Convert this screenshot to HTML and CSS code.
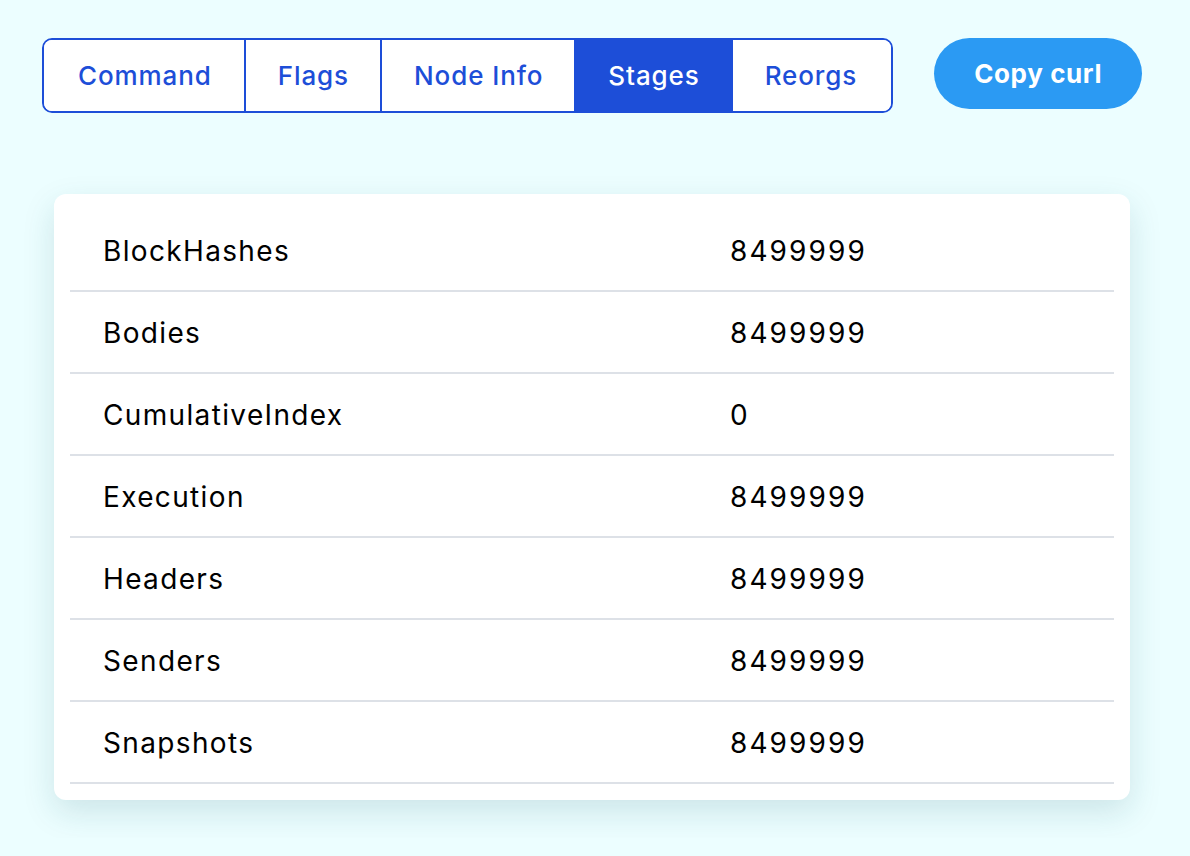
FILE: index.html
```html
<!DOCTYPE html>
<html>
<head>
<meta charset="utf-8">
<link rel="stylesheet" href="styles.css">
</head>
<body>
<div class="page">
  <div class="toolbar">
    <div class="tabs">
      <button class="tab">Command</button>
      <button class="tab">Flags</button>
      <button class="tab">Node Info</button>
      <button class="tab active">Stages</button>
      <button class="tab">Reorgs</button>
    </div>
    <button class="copy">Copy curl</button>
  </div>
  <div class="card">
    <table class="stages">
      <tr><td class="name">BlockHashes</td><td class="val">8499999</td></tr>
      <tr><td class="name">Bodies</td><td class="val">8499999</td></tr>
      <tr><td class="name">CumulativeIndex</td><td class="val">0</td></tr>
      <tr><td class="name">Execution</td><td class="val">8499999</td></tr>
      <tr><td class="name">Headers</td><td class="val">8499999</td></tr>
      <tr><td class="name">Senders</td><td class="val">8499999</td></tr>
      <tr><td class="name">Snapshots</td><td class="val">8499999</td></tr>
    </table>
  </div>
</div>
</body>
</html>
```
FILE: styles.css
```css
html, body {
  margin: 0;
  padding: 0;
  background: #ecfeff;
  font-family: Inter, "Noto Sans", sans-serif;
}
.page {
  padding: 38px 42px;
}
.toolbar {
  display: flex;
  align-items: flex-start;
  gap: 41px;
}
.tabs {
  display: flex;
  flex-shrink: 0;
  border: 2px solid #1d4ed8;
  border-radius: 10px;
  overflow: hidden;
  background: #fff;
}
.tab {
  font-family: inherit;
  font-size: 26px;
  font-weight: 500;
  letter-spacing: 0.9px;
  white-space: nowrap;
  color: #1d4ed8;
  background: #fff;
  border: none;
  border-left: 2px solid #1d4ed8;
  padding: 16px 31px 15px 32px;
  line-height: 40px;
  margin: 0;
  cursor: pointer;
}
.tab:first-child {
  border-left: none;
  padding-left: 34px;
  padding-right: 32px;
}
.tab:last-child {
  padding-right: 34px;
}
.tab.active {
  background: #1d4ed8;
  color: #fff;
}
.copy {
  flex-shrink: 0;
  white-space: nowrap;
  font-family: inherit;
  font-size: 26px;
  font-weight: 700;
  letter-spacing: 0.6px;
  color: #fff;
  background: #2b9af3;
  border: none;
  border-radius: 36px;
  height: 71px;
  padding: 0 40px;
  margin: 0;
}
.card {
  margin: 81px 12px 0 12px;
  background: #fff;
  border-radius: 12px;
  padding: 16px;
  box-shadow: 0 12px 32px rgba(20, 90, 100, 0.15);
  width: 1044px;
}
.stages {
  width: 100%;
  border-collapse: collapse;
  font-size: 28px;
  color: #000;
}
.stages td {
  padding: 2px 33px 0 33px;
  height: 78px;
  border-bottom: 2px solid #dde1e7;
  vertical-align: middle;
}
.stages td.name {
  width: 561px;
  letter-spacing: 1.35px;
}
.stages td.val {
  letter-spacing: 2.1px;
}
```
